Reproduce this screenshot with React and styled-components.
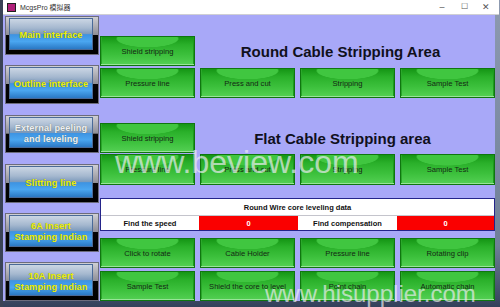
import React from 'react';
import styled, { createGlobalStyle } from 'styled-components';

const GlobalStyle = createGlobalStyle`
  html, body {
    margin: 0;
    padding: 0;
    background: #4a5870;
  }
  body {
    font-family: 'Liberation Sans', Arial, sans-serif;
  }
`;

const Window = styled.div`
  position: relative;
  width: 500px;
  height: 307px;
  overflow: hidden;
  display: flex;
  flex-direction: column;
  border-left: 3px solid #3a4356;
  box-sizing: border-box;
  background: linear-gradient(to bottom, #8d9ab0 0%, #6f7f98 80%, #34405a 100%);
`;

const TitleBar = styled.div`
  height: 14px;
  flex: none;
  display: flex;
  align-items: center;
  background: #ffffff;
  border-bottom: 1px solid #cfcfd4;
  margin-right: 1px;
  padding: 0 2px 0 4px;
`;

const AppIcon = styled.div`
  width: 7px;
  height: 7px;
  background: #b0207a;
  border: 1px solid #202020;
  margin-right: 4px;
`;

const AppTitle = styled.span`
  font-size: 7px;
  color: #333;
  font-family: 'Liberation Sans', 'Noto Sans CJK SC', sans-serif;
  flex: 1;
`;

const WinControl = styled.span`
  font-size: ${({ $size }) => $size || 9}px;
  color: #555;
  width: 22px;
  text-align: center;
  line-height: 14px;
`;

const Client = styled.div`
  display: flex;
  width: 492px;
  height: 286px;
  background: #a8a8f8;
  overflow: hidden;
`;

const LeftCol = styled.div`
  width: 97px;
  flex: none;
  box-sizing: border-box;
  padding: 1px 0 0 2px;
  display: flex;
  flex-direction: column;
  gap: 10.5px;
`;

const NavFrame = styled.div`
  width: 94px;
  height: 39px;
  box-sizing: border-box;
  border: 1px solid #6c6c7c;
  background: linear-gradient(to bottom, #cfcfd4 0%, #8e8e96 48%, #050505 50%, #000 100%);
  padding: 1px 5px 4px 3px;
`;

const NavButton = styled.div`
  height: 100%;
  box-sizing: border-box;
  border: 1px solid #4a6a98;
  background: linear-gradient(
    to bottom,
    #cbd6e4 0%,
    #a5b8cf 30%,
    #7b99bb 50%,
    #3d93e2 52%,
    #4aa6f0 75%,
    #2a78c4 100%
  );
  display: flex;
  align-items: center;
  justify-content: center;
  text-align: center;
  padding-top: 3px;
  font-size: 9.2px;
  font-weight: bold;
  line-height: 11px;
  color: ${({ $light }) => ($light ? '#eef0f6' : '#eef20a')};
  text-shadow: 0 0 1px rgba(60, 60, 0, 0.6);
  letter-spacing: 0.1px;
`;

const RightCol = styled.div`
  width: 395px;
  flex: none;
  padding-top: 21px;
  display: flex;
  flex-direction: column;
`;

const Grid = styled.div`
  display: grid;
  grid-template-columns: repeat(4, 95px);
  grid-auto-rows: ${({ $rows }) => $rows || '30px'};
  column-gap: 5px;
  row-gap: ${({ $gap }) => $gap || 2}px;
  margin-top: ${({ $top }) => $top || 0}px;
`;

const AreaTitle = styled.div`
  grid-column: 2 / span 3;
  display: flex;
  align-items: center;
  justify-content: center;
  padding-right: ${({ $shift }) => $shift || 0}px;
  font-size: 15px;
  font-weight: bold;
  color: #10101c;
`;

const GreenButton = styled.div`
  position: relative;
  box-sizing: border-box;
  border: 1px solid #0f760f;
  background:
    radial-gradient(ellipse 46% 42% at 50% 6%, #40c640 70%, rgba(64, 198, 64, 0) 74%),
    linear-gradient(to bottom, #159615 0%, #2ab02a 28%, #3dc13d 65%, #54d054 100%);
  box-shadow: inset 0 -1px 0 #98e498, inset 1px 0 0 #2aa82a, inset -1px 0 0 #1e9a1e;
  display: flex;
  align-items: center;
  justify-content: center;
  font-size: 7.6px;
  color: #142814;
  white-space: nowrap;
`;

const DataTable = styled.div`
  margin-top: 13px;
  height: 34px;
  box-sizing: border-box;
  border: 1px solid #24248a;
  background: #fff;
  display: flex;
  flex-direction: column;
`;

const TableHead = styled.div`
  height: 16px;
  display: flex;
  align-items: center;
  justify-content: center;
  font-size: 7.5px;
  font-weight: bold;
  color: #111;
  border-bottom: 1px solid #c4c4cc;
`;

const TableRow = styled.div`
  flex: 1;
  display: grid;
  grid-template-columns: 98px 99px 99px 1fr;
`;

const Cell = styled.div`
  display: flex;
  align-items: center;
  justify-content: center;
  font-size: 7.5px;
  font-weight: bold;
  background: ${({ $red }) => ($red ? '#fa0000' : '#fff')};
  color: ${({ $red }) => ($red ? '#fff' : '#111')};
`;

const Watermark = styled.div`
  position: absolute;
  left: ${({ $x }) => $x}px;
  top: ${({ $y }) => $y}px;
  font-size: ${({ $size }) => $size}px;
  line-height: 1;
  color: rgba(235, 235, 240, 0.7);
  white-space: nowrap;
  pointer-events: none;
`;

const navItems = [
  { label: 'Main interface' },
  { label: 'Outline interface' },
  { label: ['External peeling', 'and leveling'], light: true },
  { label: 'Slitting line' },
  { label: ['6A Insert', 'Stamping Indian'] },
  { label: ['10A Insert', 'Stamping Indian'] },
];

const renderLabel = (label) =>
  Array.isArray(label) ? (
    <span>
      {label[0]}
      <br />
      {label[1]}
    </span>
  ) : (
    label
  );

const roundRow = ['Pressure line', 'Press and cut', 'Stripping', 'Sample Test'];
const flatRow = ['Pressure line', 'Press and cut', 'Stripping', 'Sample Test'];
const bottomRows = [
  'Click to rotate',
  'Cable Holder',
  'Pressure line',
  'Rotating clip',
  'Sample Test',
  'Shield the core to level',
  'Point chain',
  'Automatic chain',
];

export default function App() {
  return (
    <>
      <GlobalStyle />
      <Window>
        <TitleBar>
          <AppIcon />
          <AppTitle>McgsPro 模拟器</AppTitle>
          <WinControl>–</WinControl>
          <WinControl $size={8}>☐</WinControl>
          <WinControl>✕</WinControl>
        </TitleBar>
        <Client>
          <LeftCol>
            {navItems.map((item, i) => (
              <NavFrame key={i}>
                <NavButton $light={item.light}>{renderLabel(item.label)}</NavButton>
              </NavFrame>
            ))}
          </LeftCol>
          <RightCol>
            <Grid>
              <GreenButton>Shield stripping</GreenButton>
              <AreaTitle $shift={14}>Round Cable Stripping Area</AreaTitle>
              {roundRow.map((t) => (
                <GreenButton key={t}>{t}</GreenButton>
              ))}
            </Grid>
            <Grid $top={25} $gap={1} $rows="30px 31px">
              <GreenButton>Shield stripping</GreenButton>
              <AreaTitle $shift={10}>Flat Cable Stripping area</AreaTitle>
              {flatRow.map((t) => (
                <GreenButton key={t}>{t}</GreenButton>
              ))}
            </Grid>
            <DataTable>
              <TableHead>Round Wire core leveling data</TableHead>
              <TableRow>
                <Cell>Find the speed</Cell>
                <Cell $red>0</Cell>
                <Cell>Find compensation</Cell>
                <Cell $red>0</Cell>
              </TableRow>
            </DataTable>
            <Grid $top={7} $gap={3}>
              {bottomRows.map((t, i) => (
                <GreenButton key={i}>{t}</GreenButton>
              ))}
            </Grid>
          </RightCol>
        </Client>
        <Watermark $x={112} $y={146} $size={32}>www.beview.com</Watermark>
        <Watermark $x={262} $y={282} $size={24}>www.hisupplier.com</Watermark>
      </Window>
    </>
  );
}
